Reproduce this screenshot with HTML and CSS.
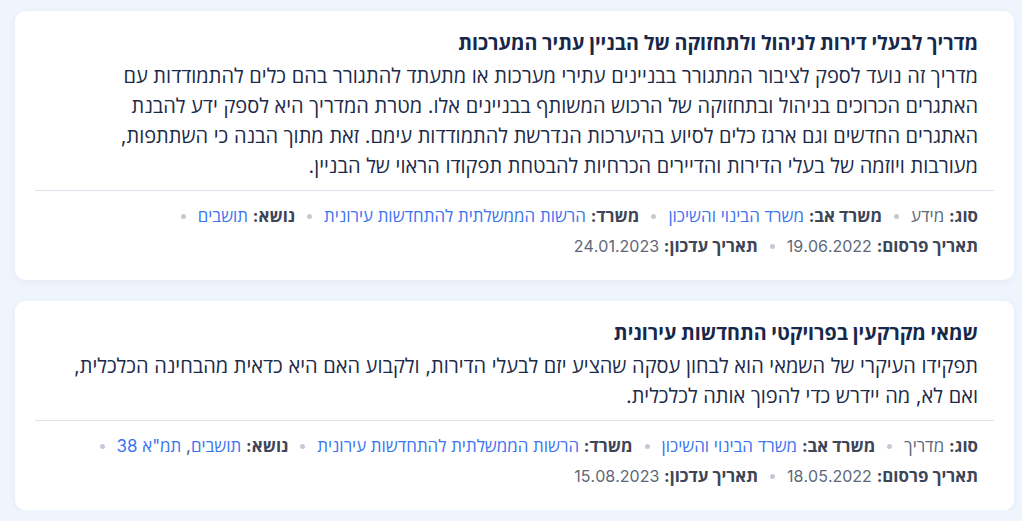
FILE: index.html
```html
<!DOCTYPE html>
<html lang="he" dir="rtl">
<head>
<meta charset="utf-8">
<title>תוצאות</title>
<link rel="stylesheet" href="styles.css">
</head>
<body>
<main class="list">
  <article class="card">
    <div class="card-head">
      <h2 class="title">מדריך לבעלי דירות לניהול ולתחזוקה של הבניין עתיר המערכות</h2>
      <p class="desc">מדריך זה נועד לספק לציבור המתגורר בבניינים עתירי מערכות או מתעתד להתגורר בהם כלים להתמודדות עם האתגרים הכרוכים בניהול ובתחזוקה של הרכוש המשותף בבניינים אלו. מטרת המדריך היא לספק ידע להבנת האתגרים החדשים וגם ארגז כלים לסיוע בהיערכות הנדרשת להתמודדות עימם. זאת מתוך הבנה כי השתתפות, מעורבות ויוזמה של בעלי הדירות והדיירים הכרחיות להבטחת תפקודו הראוי של הבניין.</p>
    </div>
    <div class="meta">
      <ul class="meta-row">
        <li><b>סוג:</b> <span class="plain">מידע</span></li>
        <li class="sep"></li>
        <li><b>משרד אב:</b> <a href="#">משרד הבינוי והשיכון</a></li>
        <li class="sep"></li>
        <li><b>משרד:</b> <a href="#">הרשות הממשלתית להתחדשות עירונית</a></li>
        <li class="sep"></li>
        <li><b>נושא:</b> <a href="#">תושבים</a></li>
        <li class="sep"></li>
      </ul>
      <ul class="meta-row">
        <li><b>תאריך פרסום:</b> <span class="date">19.06.2022</span></li>
        <li class="sep"></li>
        <li><b>תאריך עדכון:</b> <span class="date">24.01.2023</span></li>
      </ul>
    </div>
  </article>
  <article class="card">
    <div class="card-head">
      <h2 class="title">שמאי מקרקעין בפרויקטי התחדשות עירונית</h2>
      <p class="desc">תפקידו העיקרי של השמאי הוא לבחון עסקה שהציע יזם לבעלי הדירות, ולקבוע האם היא כדאית מהבחינה הכלכלית, ואם לא, מה יידרש כדי להפוך אותה לכלכלית.</p>
    </div>
    <div class="meta">
      <ul class="meta-row">
        <li><b>סוג:</b> <span class="plain">מדריך</span></li>
        <li class="sep"></li>
        <li><b>משרד אב:</b> <a href="#">משרד הבינוי והשיכון</a></li>
        <li class="sep"></li>
        <li><b>משרד:</b> <a href="#">הרשות הממשלתית להתחדשות עירונית</a></li>
        <li class="sep"></li>
        <li><b>נושא:</b> <a href="#">תושבים</a>, <a href="#">תמ"א 38</a></li>
        <li class="sep"></li>
      </ul>
      <ul class="meta-row">
        <li><b>תאריך פרסום:</b> <span class="date">18.05.2022</span></li>
        <li class="sep"></li>
        <li><b>תאריך עדכון:</b> <span class="date">15.08.2023</span></li>
      </ul>
    </div>
  </article>
</main>
</body>
</html>
```

FILE: styles.css
```css
* { box-sizing: border-box; }
html, body { margin: 0; padding: 0; }
body {
  background: #eff5fd;
  font-family: Inter, "Open Sans", sans-serif;
  color: #1c2a48;
}
.list {
  display: flex;
  flex-direction: column;
  gap: 21px;
  padding: 11px 8px 0 15px;
}
.card {
  background: #ffffff;
  border-radius: 10px;
  box-shadow: 0 2px 6px rgba(30, 64, 120, 0.06);
  padding: 17px 20px 19px;
}
.card-head {
  padding: 0 16px 9px 20px;
  border-bottom: 1px solid #dde3ec;
}
.title {
  margin: 0;
  font-size: 19.7px;
  line-height: 30px;
  font-weight: 700;
  color: #17284a;
}
.desc {
  margin: 3px 0 0;
  font-size: 20px;
  line-height: 30px;
  color: #1c2a48;
}
.meta {
  padding: 10px 16px 0;
}
.meta-row {
  list-style: none;
  margin: 0;
  padding: 0;
  display: flex;
  flex-wrap: wrap;
  align-items: center;
  gap: 0 12px;
  font-size: 16.9px;
  line-height: 30px;
  color: #4b5567;
}
.meta-row b {
  font-weight: 700;
  color: #3d4657;
}
.meta-row .plain { color: #5d6778; }
.meta-row .date { color: #5d6778; font-size: 16px; }
.meta-row a {
  color: #3b74f0;
  text-decoration: none;
}
.sep {
  width: 5px;
  height: 5px;
  border-radius: 50%;
  background: #c3cad6;
}
```
